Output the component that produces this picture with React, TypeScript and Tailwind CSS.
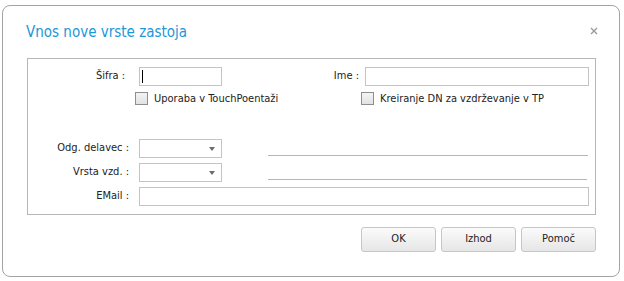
const font = { fontFamily: '"DejaVu Sans Condensed", "DejaVu Sans", sans-serif' };

function Field({ w, caret }: { w: string; caret?: boolean }) {
  return (
    <div className={`${w} h-[19px] border border-[#c4c4c4] bg-white flex items-center`}>
      {caret && <span className="ml-[2px] w-px h-[13px] bg-black" />}
    </div>
  );
}

function Select() {
  return (
    <div className="w-[83px] h-[19px] border border-[#c4c4c4] bg-white flex items-center justify-end pr-[6px]">
      <svg width="6" height="4" viewBox="0 0 6 4">
        <path d="M0 0h6L3 4z" fill="#6b6b6b" />
      </svg>
    </div>
  );
}

function Check({ label }: { label: string }) {
  return (
    <div className="flex items-center whitespace-nowrap">
      <span className="shrink-0 w-[13px] h-[13px] border border-[#8e8e8e] bg-gradient-to-b from-[#f4f4f4] to-[#e2e2e2]" />
      <span className="ml-[6px] leading-none">{label}</span>
    </div>
  );
}

function Btn({ label }: { label: string }) {
  return (
    <button className="w-[75px] h-[25px] border border-[#c6c6c6] rounded-[3px] bg-gradient-to-b from-[#fbfbfb] to-[#e6e6e6] text-[11px] text-[#222]">
      {label}
    </button>
  );
}

export default function App() {
  return (
    <div className="w-[624px] h-[281px] bg-white pt-[5px] pl-[2px] text-[11px] text-[#222]" style={font}>
      <div className="w-[618px] h-[272px] border border-[#a3a3a3] rounded-[8px] bg-white">
        {/* header */}
        <div className="h-[52px] flex items-center justify-between pl-[23px] pr-[21px]">
          <span className="text-[15px] text-[#1b98d8]">Vnos nove vrste zastoja</span>
          <svg width="8" height="8" viewBox="0 0 8 8" className="mb-[2px]">
            <path d="M1 1l6 6M7 1L1 7" stroke="#9a9a9a" strokeWidth="1.4" />
          </svg>
        </div>

        {/* form box */}
        <div className="ml-[24px] w-[569px] h-[157px] border border-[#b6b6b6] pt-[8px]">
          <div className="flex items-center h-[19px]">
            <div className="w-[240px] flex items-center">
              <span className="w-[101px] text-right pr-[4px]">Šifra :</span>
              <div className="ml-[10px]"><Field w="w-[83px]" caret /></div>
            </div>
            <div className="w-[321px] flex items-center">
              <span className="w-[91px] text-right">Ime :</span>
              <div className="ml-[6px]"><Field w="w-[224px]" /></div>
            </div>
          </div>

          <div className="flex items-center h-[13px] mt-[6px]">
            <div className="w-[240px] shrink-0 pl-[107px]"><Check label="Uporaba v TouchPoentaži" /></div>
            <div className="pl-[93px]"><Check label="Kreiranje DN za vzdrževanje v TP" /></div>
          </div>

          <div className="flex h-[19px] mt-[34px]">
            <div className="w-[240px] flex items-center">
              <span className="w-[101px] text-right">Odg. delavec :</span>
              <div className="ml-[10px]"><Select /></div>
            </div>
            <div className="w-[320px] h-px bg-[#b6b6b6] mt-[16px]" />
          </div>

          <div className="flex h-[19px] mt-[5px]">
            <div className="w-[240px] flex items-center">
              <span className="w-[101px] text-right">Vrsta vzd. :</span>
              <div className="ml-[10px]"><Select /></div>
            </div>
            <div className="w-[319px] h-px bg-[#b6b6b6] mt-[16px]" />
          </div>

          <div className="flex items-center h-[19px] mt-[5px]">
            <span className="w-[101px] text-right">EMail :</span>
            <div className="ml-[10px]"><Field w="w-[450px]" /></div>
          </div>
        </div>

        {/* buttons */}
        <div className="ml-[24px] w-[569px] flex justify-end gap-[5px] mt-[12px]">
          <Btn label="OK" />
          <Btn label="Izhod" />
          <Btn label="Pomoč" />
        </div>
      </div>
    </div>
  );
}
